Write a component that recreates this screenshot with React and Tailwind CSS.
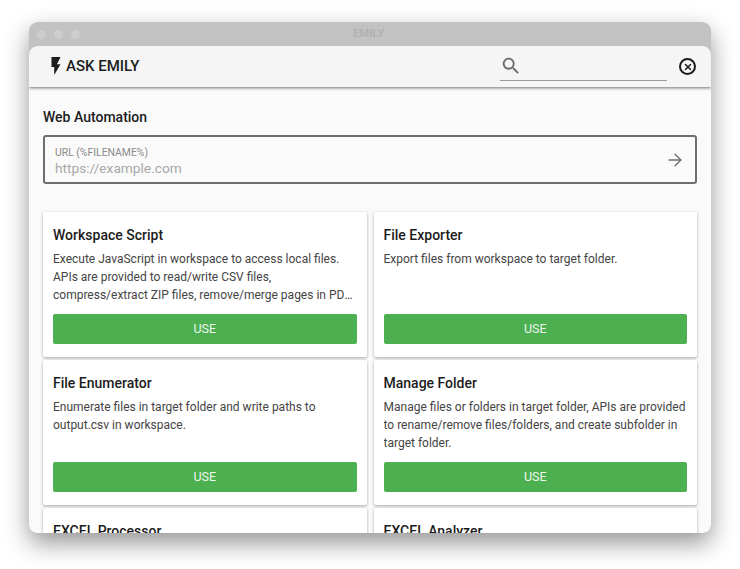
import { ArrowRight, X } from "lucide-react";

const tools = [
  {
    name: "Workspace Script",
    desc: "Execute JavaScript in workspace to access local files. APIs are provided to read/write CSV files, compress/extract ZIP files, remove/merge pages in PDF files and more.",
  },
  { name: "File Exporter", desc: "Export files from workspace to target folder." },
  {
    name: "File Enumerator",
    desc: "Enumerate files in target folder and write paths to output.csv in workspace.",
  },
  {
    name: "Manage Folder",
    desc: "Manage files or folders in target folder, APIs are provided to rename/remove files/folders, and create subfolder in target folder.",
  },
  { name: "EXCEL Processor", desc: "Process EXCEL files in workspace." },
  { name: "EXCEL Analyzer", desc: "Analyze EXCEL files in workspace." },
];

const ToolCard = ({ tool }) => (
  <div className="flex h-[145px] flex-col rounded-[2px] bg-white px-[10px] pt-[13px] pb-[13px] shadow-[0_1px_3px_rgba(0,0,0,0.35)]">
    <h3 className="text-[14px] leading-[20px] font-medium text-[#1c1c1c]">{tool.name}</h3>
    <p className="mt-[5px] line-clamp-3 h-[54px] text-[12px] leading-[18px] text-[#444]">
      {tool.desc}
    </p>
    <button className="mt-auto h-[30px] w-full rounded-[2px] bg-[#4caf50] text-[12.5px] text-white/90">
      USE
    </button>
  </div>
);

export default function App() {
  return (
    <div className="h-[569px] w-[740px] overflow-hidden bg-white pt-[22px] pl-[29px] font-['Roboto',sans-serif]">
      <div className="flex h-[511px] w-[682px] flex-col overflow-hidden rounded-t-[9px] rounded-b-[8px] bg-[#c2c2c2] shadow-[0_10px_24px_rgba(0,0,0,0.42)]">
        <div className="flex h-[24px] shrink-0 items-center px-[8px]">
          <div className="flex gap-[8px]">
            <span className="h-[9px] w-[9px] rounded-full bg-[#cdcdcd]" />
            <span className="h-[9px] w-[9px] rounded-full bg-[#cdcdcd]" />
            <span className="h-[9px] w-[9px] rounded-full bg-[#cdcdcd]" />
          </div>
          <span className="ml-[273px] text-[11px] font-semibold tracking-[0.2px] text-[#b0b0b0]">
            EMILY
          </span>
        </div>

        <div className="flex min-h-0 flex-1 flex-col overflow-hidden rounded-t-[9px] rounded-b-[8px] bg-[#fafafa]">
          <header className="flex h-[41px] shrink-0 items-center justify-between bg-[#f5f5f5] pr-[15px] pl-[22px] shadow-[0_1px_3px_rgba(0,0,0,0.55)]">
            <div className="flex items-center gap-[5px]">
              <svg width="10" height="18" viewBox="7 2 10 20" fill="#1c1c1c" className="-mt-[1px]">
                <path d="M7 2v11h3v9l7-12h-4l4-8z" />
              </svg>
              <span className="text-[15px] font-medium text-[#1c1c1c]">ASK EMILY</span>
            </div>
            <div className="flex items-center gap-[12px]">
              <div className="flex h-[28px] w-[167px] items-start border-b border-[#9a9a9a]">
                <svg width="22" height="22" viewBox="0 0 24 24" fill="#6b6b6b" className="mt-[2px]">
                  <path d="M15.5 14h-.79l-.28-.27C15.41 12.59 16 11.11 16 9.5 16 5.91 13.09 3 9.5 3S3 5.91 3 9.5 5.91 16 9.5 16c1.61 0 3.09-.59 4.23-1.57l.27.28v.79l5 4.99L20.49 19l-4.99-5zm-6 0C7.01 14 5 11.99 5 9.5S7.01 5 9.5 5 14 7.01 14 9.5 11.99 14 9.5 14z" />
                </svg>
              </div>
              <div className="flex h-[17px] w-[17px] items-center justify-center rounded-full border-2 border-[#1c1c1c]">
                <X size={10} strokeWidth={3.5} className="text-[#1c1c1c]" />
              </div>
            </div>
          </header>

          <main className="min-h-0 flex-1 overflow-hidden px-[14px] pt-[20px]">
            <h2 className="text-[14px] leading-[20px] font-medium text-[#1c1c1c]">Web Automation</h2>
            <div className="mt-[8px] flex h-[49px] items-center justify-between rounded-[3px] border-2 border-[#6e6e6e] pr-[10px] pl-[10px]">
              <div className="mt-[4px] flex flex-col">
                <span className="text-[10.4px] leading-[13px] text-[#8a8a8a]">URL (%FILENAME%)</span>
                <span className="text-[13.7px] leading-[18px] text-[#a8a8a8]">https://example.com</span>
              </div>
              <ArrowRight size={20} strokeWidth={1.6} className="text-[#6e6e6e]" />
            </div>

            <div className="mt-[28px] grid grid-cols-2 gap-x-[7px] gap-y-[3px]">
              {tools.map((tool) => (
                <ToolCard key={tool.name} tool={tool} />
              ))}
            </div>
          </main>
        </div>
      </div>
    </div>
  );
}
